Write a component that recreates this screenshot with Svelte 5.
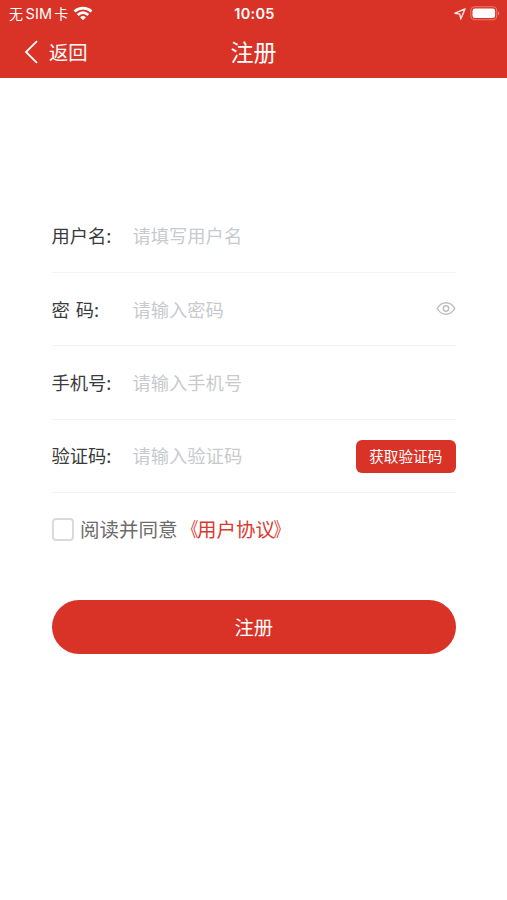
<script>
  let username = $state('');
  let password = $state('');
  let phone = $state('');
  let code = $state('');
  let agreed = $state(false);
  let visible = $state(false);
</script>

<div class="screen">
  <header>
    <div class="status">
      <div class="carrier">
        <span class="cjk">无</span><span class="sim">SIM</span><span class="cjk">卡</span>
        <svg class="wifi" width="20" height="15" viewBox="0 0 20 15" fill="none" stroke="#fff" stroke-width="2.7">
          <path d="M1.5 5.4C6.3 .9 13.7 .9 18.5 5.4" />
          <path d="M4.7 9C8 6 12 6 15.3 9" />
          <path d="M7.1 11.3Q10 8.9 12.9 11.3L10 14.2Z" fill="#fff" stroke="none" />
        </svg>
      </div>
      <time>10:05</time>
      <div class="indicators">
        <svg width="12" height="12" viewBox="0 0 12 12" fill="none" stroke="#ffe7e3" stroke-width="1.4" stroke-linejoin="round">
          <path d="M11 1L1 5.2L5.8 6.1L6.8 11Z" />
        </svg>
        <svg width="30" height="15" viewBox="0 0 30 15">
          <rect x=".8" y=".8" width="26" height="13" rx="4" fill="none" stroke="#e97a70" stroke-width="1.1" />
          <rect x="2.5" y="2.5" width="22.6" height="9.6" rx="2.4" fill="#fff" />
          <path d="M28.2 5.2Q30.2 7.3 28.2 9.4Z" fill="#ee9890" />
        </svg>
      </div>
    </div>
    <nav>
      <button class="back">
        <svg width="15" height="24" viewBox="0 0 15 24" fill="none" stroke="#fff" stroke-width="1.8"><path d="M13 1.2L2 12L13 22.8" /></svg>
        <span>返回</span>
      </button>
      <h1>注册</h1>
    </nav>
  </header>

  <main>
    <label class="row"><span>用户名:</span><input bind:value={username} placeholder="请填写用户名" /></label>
    <div class="row">
      <span class="spaced">密 码:</span>
      <input type={visible ? 'text' : 'password'} bind:value={password} placeholder="请输入密码" />
      <button class="eye" aria-label="显示密码" onclick={() => (visible = !visible)}>
        <svg width="20" height="15" viewBox="0 0 20 15" fill="none" stroke="#bdbec0" stroke-width="1.5">
          <path d="M1.2 7.5C5.6 -.2 14.4 -.2 18.8 7.5C14.4 15.2 5.6 15.2 1.2 7.5Z" stroke-linejoin="round" />
          <circle cx="10" cy="7.5" r="2.7" />
        </svg>
      </button>
    </div>
    <label class="row"><span>手机号:</span><input bind:value={phone} placeholder="请输入手机号" /></label>
    <div class="row">
      <span>验证码:</span>
      <input bind:value={code} placeholder="请输入验证码" />
      <button class="code">获取验证码</button>
    </div>
    <div class="agreement">
      <input type="checkbox" bind:checked={agreed} aria-label="阅读并同意" />
      <span class="text">阅读并同意<span class="link"><span class="open">《</span>用户协议<span class="close">》</span></span></span>
    </div>
    <button class="submit">注册</button>
  </main>
</div>

<style>
  :global(body) { background: #fff; }
  .screen, .screen * { box-sizing: border-box; }
  .screen {
    width: 100%;
    height: 900px;
    background: #fff;
    overflow: hidden;
    font-family: "Noto Sans CJK SC", sans-serif;
  }
  button, input { font-family: inherit; border: 0; padding: 0; margin: 0; background: none; }
  header { height: 78px; background: #d93226; color: #fff; }
  .status, nav { display: grid; grid-template-columns: 1fr auto 1fr; align-items: center; }
  .status { height: 27px; padding: 0 7px 0 9px; }
  .carrier { display: flex; align-items: center; height: 27px; }
  .cjk { font-size: 14px; line-height: 27px; }
  .sim { font: 14.5px/27px Inter, sans-serif; margin: 0 2px 0 2.5px; letter-spacing: .15px; }
  .wifi { margin-left: 5px; margin-top: -1px; }
  time { font: 600 14.5px/27px Inter, sans-serif; letter-spacing: .25px; }
  .indicators { display: flex; align-items: center; justify-content: flex-end; gap: 4px; }
  nav { height: 51px; padding: 0 24px; }
  .back { display: flex; align-items: center; gap: 10px; color: #fff; font-size: 19.3px; line-height: 28px; }
  .back svg { margin-top: -1px; }
  .back span { padding-bottom: 2px; }
  h1 { margin: 0; padding-bottom: 3px; font-size: 23px; font-weight: 400; line-height: 34px; }
  main { padding: 121.7px 51px 0 51.5px; }
  .row { display: flex; align-items: center; height: 73.3px; border-bottom: 1px solid #f3f3f4; font-size: 18.3px; color: #3a3b3d; }
  .row > span { width: 81px; flex: none; white-space: pre; padding-bottom: 1px; }
  .row > .spaced { word-spacing: 1.8px; }
  .row input { flex: 1; min-width: 0; height: 30px; padding-bottom: 1px; font-size: 18.3px; color: #303133; outline: none; }
  .row input::placeholder { color: #c8cace; opacity: 1; }
  .eye { display: flex; margin: 0 .5px 1px 0; }
  .code { width: 100.5px; height: 33px; margin-top: 1px; padding-bottom: 2px; border-radius: 6px; background: #d93226; color: #fff; font-size: 14.6px; }
  .agreement { display: flex; align-items: center; height: 73px; font-size: 19.5px; color: #6c6c6c; }
  .agreement input { appearance: none; width: 22.5px; height: 22.5px; margin-right: 6px; border: 2px solid #dadada; border-radius: 4px; }
  .agreement input:checked { background: #d93226; }
  .text { padding-bottom: 2px; white-space: nowrap; }
  .link { color: #d93a30; }
  .open, .close { display: inline-block; }
  .open { transform: translateX(.8px) scaleX(.8); transform-origin: right; }
  .close { transform: translateX(-1.5px) scaleX(.8); transform-origin: left; }
  .submit { display: block; width: 100%; height: 54px; margin-top: 34.3px; padding-bottom: 1px; border-radius: 27px; background: #d93226; color: #fff; font-size: 19.3px; }
</style>
